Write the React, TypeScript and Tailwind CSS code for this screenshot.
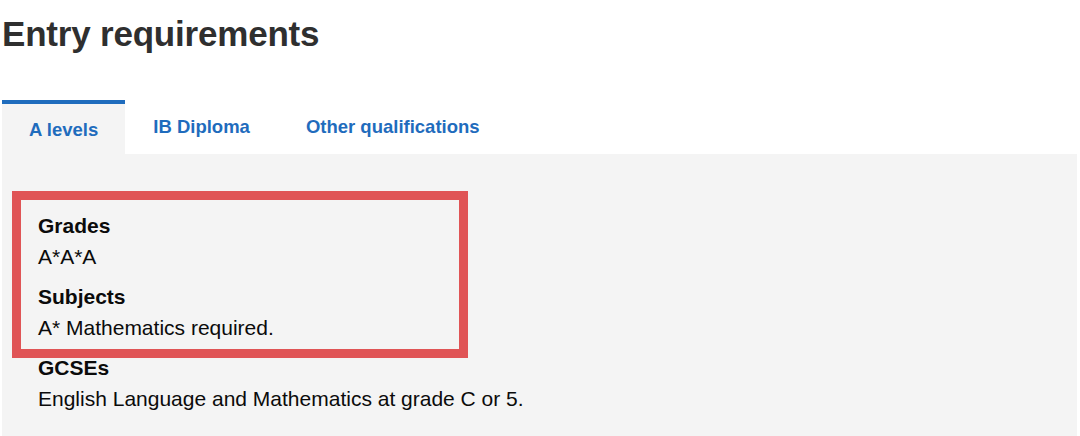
const tabs = ['A levels', 'IB Diploma', 'Other qualifications']

const rows = [
  { label: 'Grades', value: 'A*A*A' },
  { label: 'Subjects', value: 'A* Mathematics required.' },
  { label: 'GCSEs', value: 'English Language and Mathematics at grade C or 5.' },
]

export default function App() {
  const active = 0

  return (
    <div className="bg-white min-h-[436px] pl-[2px] pr-[3px] pt-[14px] font-['Liberation_Sans',Arial,sans-serif]">
      <h1 className="text-[35px] leading-[40px] font-bold text-[#2f2f2f] tracking-[-0.2px]">Entry requirements</h1>

      <div className="mt-[46px] flex">
        {tabs.map((t, i) => (
          <div
            key={t}
            className={
              i === active
                ? 'bg-[#f4f4f4] border-t-4 border-[#1f6cbd] px-[27px] pt-[14px] pb-[11px]'
                : 'px-[28px] pt-[15px] pb-[14px]'
            }
          >
            <span className="text-[18.5px] leading-[24px] font-bold text-[#1f6cbd]">{t}</span>
          </div>
        ))}
      </div>

      <div className="relative bg-[#f4f4f4] pl-[36px] pt-[56px] pb-[32px]">
        <dl className="text-[21px] leading-[31px] text-[#0b0b0b]">
          {rows.map((r, i) => (
            <div key={r.label} className={i > 0 ? 'mt-[9px]' : ''}>
              <dt className="font-bold">{r.label}</dt>
              <dd>{r.value}</dd>
            </div>
          ))}
        </dl>

        {/* highlight annotation */}
        <div className="absolute left-[10px] top-[37px] w-[456px] h-[167px] border-[9px] border-[#e05456] pointer-events-none" />
      </div>
    </div>
  )
}
